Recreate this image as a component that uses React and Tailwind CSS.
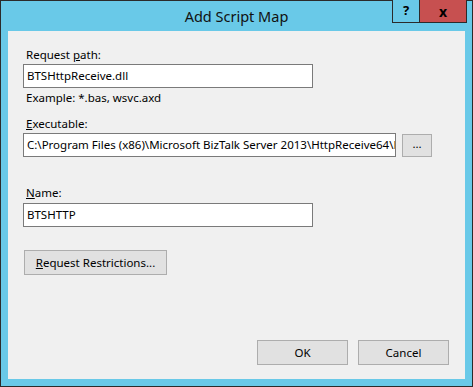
const font = { fontFamily: '"Noto Sans", "Open Sans", sans-serif' };

const Field = ({ value, className = '' }) => (
  <div
    className={`h-[24px] border border-[#7a7a7a] bg-white pl-[3px] flex items-center text-[11.5px] text-black overflow-hidden whitespace-nowrap ${className}`}
  >
    {value}
  </div>
);

const Btn = ({ children, className = '' }) => (
  <div
    className={`flex items-center justify-center border border-[#adadad] bg-[#e1e1e1] text-[11.5px] text-black ${className}`}
  >
    {children}
  </div>
);

const Label = ({ children, className = '' }) => (
  <div className={`h-[16px] leading-[16px] text-[11.5px] text-black ml-[3px] ${className}`}>{children}</div>
);

export default function App() {
  return (
    <div
      className="w-[473px] h-[387px] border border-[#2b2b2b] bg-[#69c9e8] flex flex-col"
      style={font}
    >
      <div className="relative h-[30px] shrink-0 flex items-center justify-center">
        <span className="text-[14.5px] text-[#111] pt-[1px]">Add Script Map</span>
        <div className="absolute right-[5px] -top-[1px] flex h-[23px]">
          <div className="w-[28px] border-l border-b border-r border-[#2b2b2b] bg-[#69c9e8] flex items-center justify-center text-[13px] font-bold text-black">
            ?
          </div>
          <div className="w-[47px] border-b border-r border-[#2b2b2b] bg-[#c75050] flex items-center justify-center text-[14px] font-bold text-black">
            x
          </div>
        </div>
      </div>
      <div className="flex-1 mx-[7px] mb-[7px] bg-[#f0f0f0] flex flex-col px-[15px] pb-[14px]">
        <Label className="mt-[16px]">
          Request <span className="underline">p</span>ath:
        </Label>
        <Field value="BTSHttpReceive.dll" className="mt-[1px] w-[290px]" />
        <Label className="mt-[2px]">Example: *.bas, wsvc.axd</Label>
        <Label className="mt-[10px]">
          <span className="underline">E</span>xecutable:
        </Label>
        <div className="mt-[1px] flex items-start gap-[6px]">
          <Field
            value="C:\Program Files (x86)\Microsoft BizTalk Server 2013\HttpReceive64\BTSHttpReceive.dll"
            className="w-[373px] shrink-0"
          />
          <Btn className="mt-[1px] w-[30px] h-[23px] pb-[4px] shrink-0">...</Btn>
        </div>
        <Label className="mt-[28px]">
          <span className="underline">N</span>ame:
        </Label>
        <Field value="BTSHTTP" className="mt-[2px] w-[290px]" />
        <Btn className="mt-[23px] ml-[1px] w-[143px] h-[25px]">
          <span>
            <span className="underline">R</span>equest Restrictions...
          </span>
        </Btn>
        <div className="flex-1" />
        <div className="flex justify-end gap-[10px] pr-[1px]">
          <Btn className="w-[91px] h-[25px] border-[#3c8fd8]">OK</Btn>
          <Btn className="w-[91px] h-[25px]">Cancel</Btn>
        </div>
      </div>
    </div>
  );
}
